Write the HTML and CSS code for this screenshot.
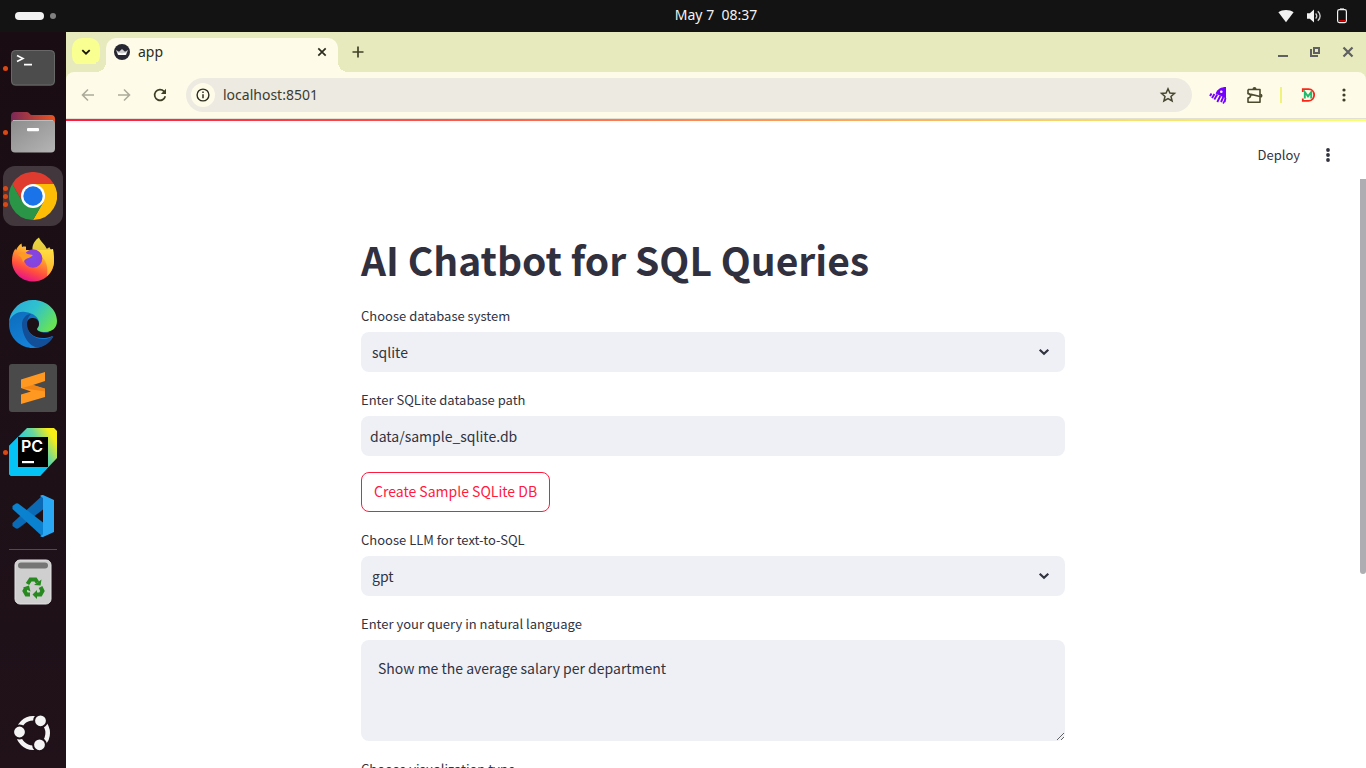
FILE: index.html
```html
<!DOCTYPE html>
<html lang="en">
<head>
<meta charset="utf-8">
<meta name="viewport" content="width=device-width, initial-scale=1">
<title>app</title>
<link rel="stylesheet" href="styles.css">
</head>
<body>
<div class="desktop">
  <header class="topbar">
    <button class="workspaces" aria-label="Activities"><span class="pill"></span><span class="dot"></span></button>
    <div class="topbar-main">
      <time class="clock" datetime="05-07T08:37">May 7&nbsp; 08:37</time>
      <div class="status">
        <svg width="16" height="16" viewBox="0 0 16 16" aria-hidden="true"><path d="M.4 4.300C4.600 1.200 11.400 1.200 15.600 4.300L8 14.200z" fill="#f2f2f2"/></svg>
        <svg width="16" height="16" viewBox="0 0 16 16" aria-hidden="true"><path d="M1 5.200h2.800L8 1.600v12.800L3.800 10.800H1z" fill="#f2f2f2"/><path d="M9.600 5.400c1.500 1.400 1.500 3.800 0 5.200M11.800 3.200c3.100 2.700 3.100 6.900 0 9.600" fill="none" stroke="#ccc" stroke-width="1.400"/></svg>
        <svg width="16" height="16" viewBox="0 0 16 16" aria-hidden="true"><path d="M6 .4h4v1.400H6z" fill="#f2f2f2"/><rect x="3.600" y="1.600" width="8.800" height="13" rx="1.800" fill="none" stroke="#f2f2f2" stroke-width="1.200"/><path d="M5 12h6v1.600H5z" fill="#e00000"/></svg>
      </div>
    </div>
  </header>

  <nav class="dock" aria-label="Dock">
    <button class="app" aria-label="Terminal">
      <span class="marks"><i></i></span>
      <svg width="48" height="48" viewBox="0 0 48 48"><rect x="2" y="6" width="44" height="36" rx="4.500" fill="#353535"/><rect x="2.500" y="6.500" width="43" height="34.500" rx="4" fill="#4c4c4c" stroke="#686868"/><path d="M8 11.500l6 3-6 3M15 20.600h8" fill="none" stroke="#fff" stroke-width="1.600"/></svg>
    </button>
    <button class="app" aria-label="Files">
      <span class="marks"><i></i></span>
      <svg width="48" height="48" viewBox="0 0 48 48"><defs><linearGradient id="f1"><stop offset="0" stop-color="#7b2857"/><stop offset="1" stop-color="#e95420"/></linearGradient><linearGradient id="f2" x2="1" y2="1"><stop offset="0" stop-color="#8c8c8c"/><stop offset="1" stop-color="#b5b5b5"/></linearGradient></defs><path d="M2 20V8q0-4 4-4h12q1.500 0 2.500 1.500T23 7h19q4 0 4 4v9z" fill="url(#f1)"/><rect x="2" y="12" width="44" height="32.500" rx="4" fill="url(#f2)"/><path d="M4 12.500h40" stroke="#bbb"/><rect x="18" y="20" width="12" height="3.200" rx="1" fill="#fff"/></svg>
    </button>
    <button class="app active" aria-label="Google Chrome">
      <span class="marks"><i></i><i></i><i></i></span>
      <svg width="48" height="48" viewBox="0 0 48 48"><path d="M3.200 12A24 24 0 0 1 44.800 12H24v12L13.600 30z" fill="#e03b2f"/><path d="M24 12h20.800A24 24 0 0 1 24 48l10.400-18z" fill="#fdbd07"/><path d="M3.200 12A24 24 0 0 0 24 48L34.400 30 24 34 13.600 30z" fill="#2a9547"/><circle cx="24" cy="24" r="12" fill="#fff"/><circle cx="24" cy="24" r="9.700" fill="#1a73e8"/></svg>
    </button>
    <button class="app" aria-label="Firefox">
      <svg width="48" height="48" viewBox="0 0 48 48"><defs><linearGradient id="x1" x1=".8" y1=".05" x2=".35" y2="1"><stop offset="0" stop-color="#fff44f"/><stop offset=".35" stop-color="#ffa52e"/><stop offset=".7" stop-color="#ff4f3e"/><stop offset="1" stop-color="#e8108b"/></linearGradient><radialGradient id="x2"><stop offset="0" stop-color="#7a4be8"/><stop offset="1" stop-color="#8d3fd8"/></radialGradient><linearGradient id="x3" x2="0" y2="1"><stop offset="0" stop-color="#fff04a"/><stop offset="1" stop-color="#ffb62f"/></linearGradient></defs><path d="M3 25c0-5 1-9 3.500-12.500l.5 2c1-3 3-5.500 5.500-7L13 11c2-.8 3-.5 4-.3V14h22l5-1c1 4 1 8 1 12 0 12-9.500 20.500-21 20.500S3 36.500 3 25z" fill="url(#x1)"/><path d="M30 1.500c1.500 4 5.500 6 7.500 11 1 0 2-.5 2.600-1.500C43 15 45 20 45 25c0 6-3 12-7 15 1-8 0-14-5-19-3-3-8-4-9.500-7.500C23 9 26 4 30 1.500z" fill="url(#x3)" opacity=".9"/><circle cx="24" cy="22.500" r="9.300" fill="url(#x2)"/><path d="M9 19c4-3 7-3 9.500-1l5.500 1c-1.500 2-4 3-6 3.500-2 1-3 2-4 4-1-4-2-6-5-7.500z" fill="#ff9a22"/></svg>
    </button>
    <button class="app" aria-label="Microsoft Edge">
      <svg width="48" height="48" viewBox="0 0 48 48"><defs><linearGradient id="e1" x1="0" y1=".1" x2="1" y2=".6"><stop offset="0" stop-color="#2ba9e0"/><stop offset=".5" stop-color="#2fc2ce"/><stop offset="1" stop-color="#67e356"/></linearGradient><linearGradient id="e2" x2=".6" y2="1"><stop offset="0" stop-color="#0c6ab8"/><stop offset="1" stop-color="#1584dc"/></linearGradient></defs><path d="M0 24C0 8 12 2 24 12L44 37C40 43 33 48 24 48 11 48 0 38 0 24z" fill="url(#e2)"/><path d="M0 22C2 8 12 0 24 0c14 0 24 10 24 21 0 7-5 11-12 11-5 0-8-1.500-8-3 0-1.500 2-2 2-6 0-5-5-10-14-11C8 11 2 16 0 22z" fill="url(#e1)"/><path d="M13 24c0-5 4-10 9-10-3 3-4 6-4 10 0 8 6 15 16 15 6 0 9-3 10.500-2.500C40 44 34 47 29 47.500 20 47 13 35 13 24z" fill="#124f98"/><path d="M18 24c0-5 3-6 6-6 4 0 6 3 6 6 0 3-2 4-2 5 0 2 4 3.500 8 3.500 5 0 9-1 12-4.500-.3 3-1.300 5.500-3 8-2-.5-5 2-11 2C24 38 18 32 18 24z" fill="#1c1016"/></svg>
    </button>
    <button class="app" aria-label="Sublime Text">
      <svg width="48" height="48" viewBox="0 0 48 48"><rect width="48" height="48" rx="3" fill="#4a4a4a"/><path d="M12 15.500L36 8v9L24 21l12 4v8l-24 7v-9.500l10-3-10-3.500z" fill="#ff9820"/><path d="M13 24l23 3.500v-3L24 21z" fill="#f08516"/></svg>
    </button>
    <button class="app" aria-label="PyCharm">
      <span class="marks"><i></i></span>
      <svg width="48" height="48" viewBox="0 0 48 48"><defs><linearGradient id="p1" x1=".3" y1=".5" x2=".95" y2=".1"><stop offset="0" stop-color="#12c9ef"/><stop offset=".5" stop-color="#6ad79d"/><stop offset=".9" stop-color="#f7ee18"/></linearGradient></defs><path d="M18 0h27l3 3v27L31 48H2l-2-2V18z" fill="url(#p1)"/><path d="M0 18L9 9v30h30L31 48H2l-2-2z" fill="#06c3f6"/><rect x="9" y="9" width="30" height="30"/><text x="12" y="24" class="pc">PC</text><path d="M13 33h12v2.200H13z" fill="#fff"/></svg>
    </button>
    <button class="app" aria-label="Visual Studio Code">
      <svg width="48" height="48" viewBox="0 0 48 48"><path d="M34 3L3.500 31v3l3 2.300q1.500.7 3 0L34 17.500z" fill="#0a6ab5"/><path d="M34 45L3.500 17v-3l3-2.300q1.500-.7 3 0L34 30.500z" fill="#0b82cf"/><path d="M34 3l11 5v32l-11 5q-1.500.3-3-1l3-1.500V6L31 4q1.500-1.300 3-1z" fill="#2aa8f4"/></svg>
    </button>
    <hr class="dock-line">
    <button class="app" aria-label="Trash">
      <svg width="48" height="48" viewBox="0 0 48 48"><rect x="6" y="2" width="36" height="44" rx="5" fill="#cfcfcf" stroke="#e3e3e3"/><rect x="9" y="4.500" width="30" height="6" rx="3" fill="#757575"/><g fill="none" stroke="#27891f" stroke-width="4"><path d="M18.500 26l3-4.500h5l2 3M31.500 29l2 4-2 3.500h-4M21 36.500h-3.500L15.500 33l1.500-3"/></g><g fill="#27891f"><path d="M25 27l6.500.5 1-6zM28 32v9l-4.500-4.500zM14 29.500l6-2 1.500 6z"/></g></svg>
    </button>
    <button class="app show-apps" aria-label="Show Apps">
      <svg width="48" height="48" viewBox="0 0 48 48"><circle cx="24" cy="24" r="14.700" fill="none" stroke="#f4f4f4" stroke-width="4.600"/><g fill="#f4f4f4" stroke="#1f1118" stroke-width="2"><circle cx="10.500" cy="23" r="6.400"/><circle cx="31.500" cy="11.800" r="6.400"/><circle cx="30.500" cy="35.800" r="6.400"/></g></svg>
    </button>
  </nav>

  <div class="browser">
    <div class="tabstrip">
      <button class="tab-search" aria-label="Search tabs"><svg width="12" height="12" viewBox="0 0 12 12"><path d="M2.300 4.200L6 7.700l3.700-3.500" fill="none" stroke="#151500" stroke-width="1.800"/></svg></button>
      <div class="tab">
        <svg width="16" height="16" viewBox="0 0 16 16" aria-hidden="true"><circle cx="8" cy="8" r="8" fill="#262730"/><path d="M2 6l3 1.800L8 5l3 2.800L14 6l-2 5H4z" fill="#ccc"/><path d="M4.500 11l-1-2.500 4.500 1 4.500-1-1 2.500z" fill="#fff"/></svg>
        <span class="tab-title">app</span>
        <button class="tab-close" aria-label="Close tab"><svg width="10" height="10" viewBox="0 0 10 10"><path d="M1.300 1.300l7.400 7.400M8.700 1.300L1.300 8.700" stroke="#2c2c1e" stroke-width="1.700"/></svg></button>
      </div>
      <button class="new-tab" aria-label="New tab"><svg width="12" height="12" viewBox="0 0 12 12"><path d="M6 .5v11M.5 6h11" stroke="#414128" stroke-width="1.700"/></svg></button>
      <div class="window-controls">
        <button aria-label="Minimize"><svg width="12" height="12" viewBox="0 0 12 12"><path d="M0 10h10" stroke="#5f6062" stroke-width="2"/></svg></button>
        <button aria-label="Restore"><svg width="12" height="12" viewBox="0 0 12 12"><path d="M4 2h5v5H4zM1 3v7h7" fill="none" stroke="#5f6062" stroke-width="2"/></svg></button>
        <button aria-label="Close"><svg width="12" height="12" viewBox="0 0 12 12"><path d="M1.500 1.500l9 9M10.500 1.500l-9 9" stroke="#5f6062" stroke-width="2.200"/></svg></button>
      </div>
    </div>

    <div class="toolbar">
      <button class="tool" aria-label="Back"><svg width="16" height="16" viewBox="0 0 16 16"><path d="M14 8H3M8 2.500L2.500 8 8 13.500" fill="none" stroke="#acaa9b" stroke-width="1.600"/></svg></button>
      <button class="tool" aria-label="Forward"><svg width="16" height="16" viewBox="0 0 16 16"><path d="M2 8h11M8 2.500L13.500 8 8 13.500" fill="none" stroke="#acaa9b" stroke-width="1.600"/></svg></button>
      <button class="tool" aria-label="Reload"><svg width="16" height="16" viewBox="0 0 16 16"><path d="M13.300 9.300A5.400 5.400 0 1 1 12 4.300L13.500 6" fill="none" stroke="#3f3f25" stroke-width="1.700"/><path d="M14 1.700v5.200H8.900z" fill="#3f3f25"/></svg></button>
      <div class="omnibox">
        <button class="site-info" aria-label="View site information"><svg width="14" height="14" viewBox="0 0 14 14"><circle cx="7" cy="7" r="5.900" fill="none" stroke="#2c2c1e" stroke-width="1.400"/><path d="M7 6.200v4M7 3.500v1.500" stroke="#2c2c1e" stroke-width="1.500"/></svg></button>
        <input class="address" type="text" aria-label="Address" value="localhost:8501">
        <button class="tool" aria-label="Bookmark this tab"><svg width="18" height="18" viewBox="0 0 18 18"><path d="M9 2.800l1.900 4.200 4.600.4-3.500 3.100 1.100 4.500L9 12.600 4.900 15 6 10.500 2.500 7.400 7.100 7z" fill="none" stroke="#47472f" stroke-width="1.500"/></svg></button>
      </div>
      <button class="tool" aria-label="Rocket extension"><svg width="18" height="18" viewBox="0 0 18 18"><path d="M17 1C12 1 8.500 3 6.500 7.500L17 12.500z" fill="#7500ff"/><path d="M2.500 7.500L1 10M5.500 8L3 12M8.300 8.500l-3 5M11.300 10l-3 6M14.300 11l-2.300 5M16.500 12l-1 4" stroke="#7500ff" stroke-width="1.900"/><path d="M16 14.500l-2 3" stroke="#7500ff" stroke-width="1.500"/><circle cx="12.300" cy="5.800" r="1.300" fill="#fefce9"/></svg></button>
      <button class="tool" aria-label="Extensions"><svg width="18" height="18" viewBox="0 0 18 18"><path d="M3 3.500h12V8.500M15 10.500V16.200H3v-4.200q2.500-.3 2.500-2.200T3 7.600z" fill="none" stroke="#4b4a2d" stroke-width="1.600" stroke-linejoin="round"/><path d="M3 3.500v4.100M15 8v3" stroke="#4b4a2d" stroke-width="1.600"/><path d="M7.500 3a2 2 0 0 1 4 0zM15.500 7.800a2 2 0 0 1 0 4z" fill="#4b4a2d"/></svg></button>
      <span class="tool-line"></span>
      <button class="tool" aria-label="DM extension"><svg width="16" height="16" viewBox="0 0 16 16"><path d="M2.800 5V2.200H8.500c7.500 0 7.500 11.600 0 11.600H2.800V11.500" fill="none" stroke="#fb2417" stroke-width="1.800"/><path d="M4.800 11.500V5l3.200 4.300L11.200 5v6.500" fill="none" stroke="#20b96b" stroke-width="1.900"/></svg></button>
      <button class="tool" aria-label="Chrome menu"><svg width="16" height="16" viewBox="0 0 16 16" fill="#3f3f25"><circle cx="8" cy="3" r="1.600"/><circle cx="8" cy="8" r="1.600"/><circle cx="8" cy="13" r="1.600"/></svg></button>
    </div>

    <div class="page">
      <div class="page-header">
        <button class="deploy">Deploy</button>
        <button class="page-menu" aria-label="Main menu"><svg width="16" height="16" viewBox="0 0 16 16" fill="#31333f"><circle cx="8" cy="3" r="1.900"/><circle cx="8" cy="8" r="1.900"/><circle cx="8" cy="13" r="1.900"/></svg></button>
      </div>
      <div class="page-body">
        <main class="content">
          <h1>AI Chatbot for SQL Queries</h1>
          <div class="field">
            <label for="db">Choose database system</label>
            <div class="select-box">
              <select id="db"><option>sqlite</option></select>
              <svg width="12" height="12" viewBox="0 0 12 12" aria-hidden="true"><path d="M1.700 3.800L6 7.800l4.300-4" fill="none" stroke="#31333f" stroke-width="2.200"/></svg>
            </div>
          </div>
          <div class="field">
            <label for="path">Enter SQLite database path</label>
            <input id="path" class="text-input" type="text" value="data/sample_sqlite.db">
          </div>
          <button class="create">Create Sample SQLite DB</button>
          <div class="field">
            <label for="llm">Choose LLM for text-to-SQL</label>
            <div class="select-box">
              <select id="llm"><option>gpt</option></select>
              <svg width="12" height="12" viewBox="0 0 12 12" aria-hidden="true"><path d="M1.700 3.800L6 7.800l4.300-4" fill="none" stroke="#31333f" stroke-width="2.200"/></svg>
            </div>
          </div>
          <div class="field">
            <label for="query">Enter your query in natural language</label>
            <textarea id="query" spellcheck="false">Show me the average salary per department</textarea>
          </div>
          <div class="field">
            <label for="viz">Choose visualization type</label>
            <div class="select-box"><select id="viz"><option>bar</option></select></div>
          </div>
        </main>
        <div class="scrollbar"><div class="thumb"></div></div>
      </div>
    </div>
  </div>
</div>
</body>
</html>
```
FILE: styles.css
```css
*, *::before, *::after { box-sizing: border-box; }

body {
  margin: 0;
  font-family: "Noto Sans", "Open Sans", sans-serif;
  font-size: 14px;
}

button {
  display: flex;
  align-items: center;
  justify-content: center;
  margin: 0;
  padding: 0;
  border: 0;
  background: none;
  color: inherit;
  font: inherit;
}

svg { display: block; flex: none; }

.desktop {
  display: grid;
  grid-template: 32px minmax(0, 1fr) / 66px minmax(0, 1fr);
  height: 100vh;
  overflow: hidden;
  background: #1d1017;
}

/* Top bar */
.topbar {
  grid-column: 1 / -1;
  display: grid;
  grid-template-columns: 66px 1fr;
  background: #131313;
  color: #f2f2f2;
}
.workspaces { justify-content: flex-start; gap: 6px; padding-left: 15px; }
.pill { width: 29px; height: 8px; border-radius: 4px; background: #f2f2f2; }
.dot { width: 6px; height: 6px; border-radius: 50%; background: #808080; }
.topbar-main {
  display: grid;
  grid-template-columns: 1fr auto 1fr;
  align-items: center;
}
.clock { grid-column: 2; padding-bottom: 2px; line-height: 28px; }
.status { display: flex; justify-content: flex-end; gap: 12px; padding-right: 16px; }

/* Dock */
.dock {
  display: flex;
  flex-direction: column;
  align-items: center;
  gap: 4px;
  padding: 6px 3px 5px;
  background: linear-gradient(#190d13, #21121a);
}
.app { position: relative; flex: none; width: 60px; height: 60px; border-radius: 12px; }
.app.active { background: #41373d; }
.marks {
  position: absolute;
  left: 0;
  top: 0;
  bottom: 0;
  display: flex;
  flex-direction: column;
  justify-content: center;
  gap: 3px;
}
.marks i { width: 5px; height: 5px; border-radius: 50%; background: #db4814; }
.pc { font: 600 16px Inter, "Liberation Sans", sans-serif; fill: #fff; }
.dock-line { width: 48px; height: 1px; margin: -1px 0 -2px; border: 0; background: #564a50; }
.show-apps { margin-top: auto; }

/* Browser frame */
.browser { display: flex; flex-direction: column; min-height: 0; background: #fefce9; }
.tabstrip {
  display: flex;
  flex: none;
  align-items: center;
  height: 40px;
  padding: 0 12px 0 6px;
  background: #e6eabc;
}
.tab-search { width: 28px; height: 28px; margin-right: 6px; border-radius: 10px; background: #faff91; }
.tab {
  position: relative;
  align-self: flex-end;
  display: flex;
  align-items: center;
  gap: 8px;
  width: 232px;
  height: 34px;
  padding: 0 8px 6px;
  border-radius: 10px 10px 0 0;
  background: #fefce9;
  color: #2c2c1e;
}
.tab::before, .tab::after {
  content: "";
  position: absolute;
  bottom: 0;
  width: 10px;
  height: 10px;
}
.tab::before { right: 100%; background: radial-gradient(circle at 0 0, #e6eabc 10px, #fefce9 10px); }
.tab::after { left: 100%; background: radial-gradient(circle at 100% 0, #e6eabc 10px, #fefce9 10px); }
.tab-title { flex: 1; line-height: 20px; }
.tab-close { width: 16px; height: 16px; }
.new-tab { width: 28px; height: 28px; margin-left: 6px; }
.window-controls { display: flex; gap: 20px; margin-left: auto; }

.toolbar {
  display: flex;
  flex: none;
  align-items: center;
  gap: 8px;
  height: 47px;
  padding: 0 8px;
  border-bottom: 1px solid #e2e0d0;
  border-radius: 8px 8px 0 0;
  background: #fefce9;
  box-shadow: 0 -8px 0 #e6eabc;
}
.tool { flex: none; width: 28px; height: 28px; }
.tool-line { width: 2px; height: 16px; margin: 0 4px; background: #eff37a; }
.omnibox {
  display: flex;
  flex: 1;
  align-items: center;
  gap: 8px;
  height: 34px;
  margin: 0 4px;
  padding: 0 10px 0 5px;
  border-radius: 17px;
  background: #edeae1;
}
.site-info { flex: none; width: 24px; height: 24px; border-radius: 50%; background: #fefce9; }
.address {
  flex: 1;
  min-width: 0;
  padding: 0 0 2px;
  border: 0;
  outline: 0;
  background: none;
  color: #3c3b30;
  font: inherit;
}

/* Web page */
.page {
  display: flex;
  flex: 1;
  flex-direction: column;
  min-height: 0;
  background: #fff;
  color: #31333f;
  font-family: "Noto Sans CJK SC", "Noto Sans CJK JP", sans-serif;
}
.page-header {
  display: flex;
  flex: none;
  align-items: center;
  justify-content: flex-end;
  gap: 20px;
  height: 60px;
  padding: 10px 30px 0 0;
  border-top: 2px solid;
  border-image: linear-gradient(90deg, #ff1a40, #ff4b4b 25%, #ff9a55 55%, #f8e06a 82%, #f8ff70) 1;
  font-size: 13px;
}
.deploy { padding-bottom: 2px; }
.page-body { display: flex; flex: 1; min-height: 0; overflow: hidden; }
.content {
  display: flex;
  flex: 1;
  flex-direction: column;
  gap: 16px;
  max-width: 704px;
  height: max-content;
  margin: 0 auto;
  padding-top: 54px;
}
h1 { margin: 0; padding-bottom: 2px; color: #31303f; font-size: 39px; font-weight: 700; line-height: 53px; }
.field { display: flex; flex-direction: column; gap: 4px; }
label { font-size: 13px; line-height: 24px; }
select, .text-input, textarea {
  display: block;
  width: 100%;
  height: 40px;
  margin: 0;
  border: 0;
  border-radius: 8px;
  outline: 0;
  background: #eff0f6;
  color: inherit;
  font: inherit;
  font-size: 14px;
}
select { appearance: none; padding: 0 40px 0 11px; }
.text-input { padding: 0 9px; }
textarea { height: 101px; padding: 16px 17px; line-height: 24px; resize: vertical; }
.select-box { position: relative; }
.select-box svg { position: absolute; right: 15px; top: 14px; pointer-events: none; }
.create {
  align-self: flex-start;
  height: 40px;
  padding: 0 12px 2px;
  border: 1px solid #ff1a40;
  border-radius: 8px;
  color: #ff1a40;
}
.scrollbar { flex: none; width: 6px; }
.thumb { height: 67%; border-radius: 0 0 3px 3px; background: #adadb2; }
```
